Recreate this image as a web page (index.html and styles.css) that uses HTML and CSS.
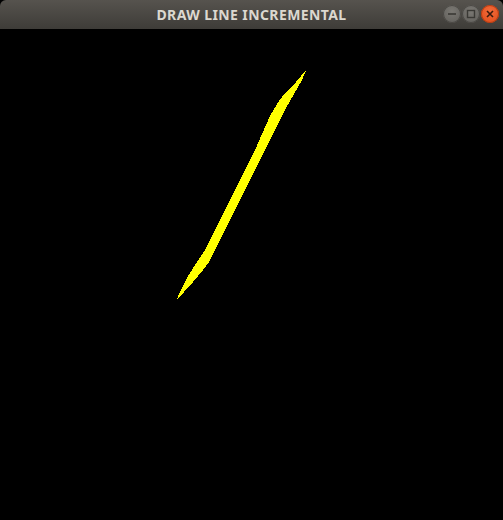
FILE: index.html
```html
<!DOCTYPE html>
<html>
<head>
<meta charset="utf-8">
<link rel="stylesheet" href="styles.css">
</head>
<body>
<div class="window">
  <div class="titlebar">
    <span class="title">DRAW LINE INCREMENTAL</span>
    <div class="controls">
      <span class="btn btn-min"><svg width="18" height="18" viewBox="0 0 18 18"><line x1="5" y1="9" x2="13" y2="9" stroke="#3a3935" stroke-width="1.6"/></svg></span>
      <span class="btn btn-max"><svg width="18" height="18" viewBox="0 0 18 18"><rect x="5.5" y="5.5" width="7" height="7" fill="none" stroke="#3a3935" stroke-width="1.4"/></svg></span>
      <span class="btn btn-close"><svg width="18" height="18" viewBox="0 0 18 18"><path d="M6 6 L12 12 M12 6 L6 12" stroke="#3a1a0e" stroke-width="1.6"/></svg></span>
    </div>
  </div>
  <div class="canvas">
    <svg class="drawing" width="503" height="491" viewBox="0 29 503 491">
      <polygon fill="#ffff00" shape-rendering="crispEdges" points="306.5,69.5 296,82 284,94 277,104 270,116 262,134 255,150 240,180 225,210 212,236 205,250 197,262 188,276 180,292 176,301 184,292 193,282 203,270 209,262 218,244 232,216 247,186 262,156 270,140 278,124 286,108 294,94 302,80"/>
    </svg>
  </div>
</div>
</body>
</html>
```
FILE: styles.css
```css
html, body {
  margin: 0;
  padding: 0;
  background: #000;
}
.window {
  width: 503px;
  height: 520px;
  display: flex;
  flex-direction: column;
  overflow: hidden;
}
.titlebar {
  height: 29px;
  flex: 0 0 29px;
  background: linear-gradient(#56534e, #3e3c38);
  display: flex;
  align-items: center;
  justify-content: center;
  position: relative;
  border-top-left-radius: 6px;
  border-top-right-radius: 6px;
}
.title {
  font-family: "Noto Sans", "DejaVu Sans", sans-serif;
  font-weight: bold;
  font-size: 14px;
  color: #dcd8cf;
  letter-spacing: 0.4px;
}
.controls {
  position: absolute;
  right: 4px;
  top: 5px;
  display: flex;
  gap: 1px;
}
.btn {
  width: 18px;
  height: 18px;
  border-radius: 50%;
  display: flex;
  align-items: center;
  justify-content: center;
}
.btn-min, .btn-max {
  background: radial-gradient(circle at 50% 35%, #7a7873, #5f5d59);
  box-shadow: inset 0 0 0 1px #4a4844;
}
.btn-close {
  background: radial-gradient(circle at 50% 35%, #f26b3a, #de4a18);
  box-shadow: inset 0 0 0 1px #b63c12;
}
.canvas {
  flex: 1;
  background: #000;
}
.drawing {
  display: block;
}
```
